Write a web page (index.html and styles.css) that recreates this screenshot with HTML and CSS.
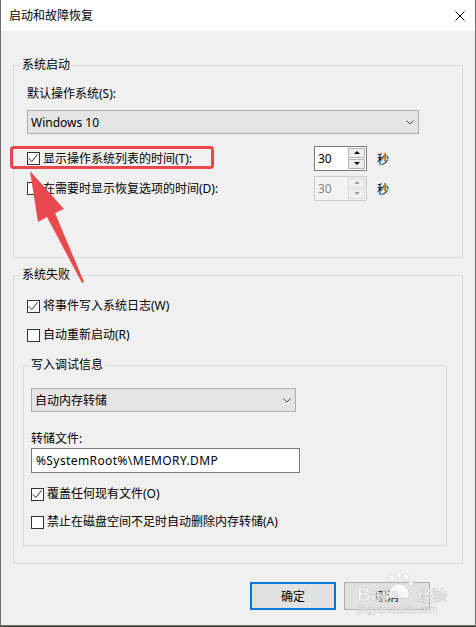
FILE: index.html
```html
<!DOCTYPE html>
<html lang="zh-CN">

<head>
    <meta charset="UTF-8">
    <meta name="viewport" content="width=device-width, initial-scale=1.0">
    <title>启动和故障恢复</title>
    <link rel="stylesheet" href="styles.css">
</head>

<body>
    <div class="dialog">
        <div class="titlebar">
            <span class="title">启动和故障恢复</span>
            <svg class="close" width="10" height="10" viewBox="0 0 10 10">
                <path d="M0.5 0.5 L9.5 9.5 M9.5 0.5 L0.5 9.5" stroke="#000" stroke-width="1" fill="none" />
            </svg>
        </div>

        <fieldset class="group group-startup">
            <legend>系统启动</legend>
            <div class="field-label">默认操作系统(S):</div>
            <div class="combo combo-os">
                <span>Windows 10</span>
                <svg class="chevron" width="8" height="5" viewBox="0 0 8 5">
                    <path d="M0.5 0.5 L4 4 L7.5 0.5" stroke="#444" fill="none" />
                </svg>
            </div>

            <div class="timer-row timer-first">
                <label class="check">
                    <span class="box checked">
                        <svg width="11" height="11" viewBox="0 0 11 11">
                            <path d="M0.8 5.3 L3.8 8.6 L9.6 1.2" stroke="#333" stroke-width="1" fill="none" />
                        </svg>
                    </span>
                    显示操作系统列表的时间(T):
                </label>
                <div class="spin">
                    <span class="spin-value">30</span>
                    <span class="spin-buttons">
                        <span class="spin-btn"><i class="tri-up"></i></span>
                        <span class="spin-btn"><i class="tri-down"></i></span>
                    </span>
                </div>
                <span class="unit">秒</span>
            </div>

            <div class="timer-row timer-second">
                <label class="check">
                    <span class="box"></span>
                    在需要时显示恢复选项的时间(D):
                </label>
                <div class="spin disabled">
                    <span class="spin-value">30</span>
                    <span class="spin-buttons">
                        <span class="spin-btn"><i class="tri-up"></i></span>
                        <span class="spin-btn"><i class="tri-down"></i></span>
                    </span>
                </div>
                <span class="unit">秒</span>
            </div>
        </fieldset>

        <fieldset class="group group-failure">
            <legend>系统失败</legend>
            <label class="check row-log">
                <span class="box checked">
                    <svg width="11" height="11" viewBox="0 0 11 11">
                        <path d="M0.8 5.3 L3.8 8.6 L9.6 1.2" stroke="#333" stroke-width="1" fill="none" />
                    </svg>
                </span>
                将事件写入系统日志(W)
            </label>
            <label class="check row-restart">
                <span class="box"></span>
                自动重新启动(R)
            </label>

            <fieldset class="group group-debug">
                <legend>写入调试信息</legend>
                <div class="combo combo-dump">
                    <span>自动内存转储</span>
                    <svg class="chevron" width="8" height="5" viewBox="0 0 8 5">
                        <path d="M0.5 0.5 L4 4 L7.5 0.5" stroke="#444" fill="none" />
                    </svg>
                </div>
                <div class="field-label dump-label">转储文件:</div>
                <div class="path-input">%SystemRoot%\MEMORY.DMP</div>
                <label class="check row-overwrite">
                    <span class="box checked">
                        <svg width="11" height="11" viewBox="0 0 11 11">
                            <path d="M0.8 5.3 L3.8 8.6 L9.6 1.2" stroke="#333" stroke-width="1" fill="none" />
                        </svg>
                    </span>
                    覆盖任何现有文件(O)
                </label>
                <label class="check row-lowdisk">
                    <span class="box"></span>
                    禁止在磁盘空间不足时自动删除内存转储(A)
                </label>
            </fieldset>
        </fieldset>

        <div class="buttons">
            <button class="btn btn-default">确定</button>
            <button class="btn">取消</button>
        </div>

        <!-- 标注：红框和箭头，以及水印 -->
        <svg class="annotation" width="476" height="627" viewBox="0 0 476 627">
            <rect x="11.5" y="147.5" width="201" height="20" rx="2" fill="none" stroke="#ea464c" stroke-width="3" />
            <polygon fill="#ea4a4e"
                points="30,171 64,209 55,213 84,282 82,283 47,217 38,222" />
            <g class="watermark">
                <text x="357" y="601" class="wm-big">Bai</text>
                <ellipse cx="392" cy="578" rx="2.6" ry="3.4" />
                <ellipse cx="399" cy="575" rx="2.6" ry="3.4" />
                <ellipse cx="406" cy="577" rx="2.6" ry="3.4" />
                <ellipse cx="411" cy="583" rx="2.2" ry="3" />
                <path d="M390 598 C386 592 393 584 399 584 C405 584 412 592 408 598 Z" />
                <text x="391" y="597" class="wm-du">du</text>
                <text x="417" y="601" class="wm-cn">经验</text>
                <text x="357" y="613" class="wm-url">jingyan.baidu.com</text>
            </g>
        </svg>
    </div>
</body>

</html>
```

FILE: styles.css
```css
body {
    margin: 0;
    background: #3d4a33;
    font-family: "Noto Sans", "Noto Sans CJK SC", sans-serif;
    font-size: 12px;
    color: #000;
}

.dialog {
    position: relative;
    width: 476px;
    height: 626px;
    box-sizing: border-box;
    background: #f0f0f0;
    border: 1px solid #6d6d6d;
    border-top: none;
}

.titlebar {
    height: 31px;
    background: #fff;
    display: flex;
    align-items: center;
    justify-content: space-between;
    padding: 0 10px 0 8px;
}

.title {
    line-height: 16px;
}

.group {
    margin: 0 0 0 12px;
    border: 1px solid #dcdcdc;
    box-sizing: border-box;
    min-width: 0;
}

.group legend {
    padding: 0 2px;
    line-height: 16px;
}

.group-startup {
    width: 450px;
    margin-top: 26px;
    padding: 13px 15px 56px 13px;
}

.group-startup legend {
    margin-left: -7px;
}

.group-failure {
    width: 450px;
    margin-top: 9px;
    padding: 15px 15px 17px 9px;
}

.group-failure legend {
    margin-left: -3px;
}

.group-debug {
    margin: 14px 0 0 0;
    padding: 15px 7px 15px 7px;
}

.group-debug legend {
    margin-left: -2px;
}

.field-label {
    line-height: 16px;
}

.combo {
    display: flex;
    align-items: center;
    justify-content: space-between;
    height: 24px;
    box-sizing: border-box;
    border: 1px solid #adadad;
    background: #e5e5e5;
    padding: 0 4px 0 3px;
}

.combo-os {
    width: 392px;
    margin-top: 8px;
}

.combo-dump {
    width: 265px;
}

.check {
    display: flex;
    align-items: center;
    gap: 3px;
    height: 16px;
    line-height: 16px;
    white-space: nowrap;
}

.box {
    flex: none;
    width: 13px;
    height: 13px;
    box-sizing: border-box;
    border: 1px solid #333;
    background: #fff;
}

.box svg {
    display: block;
}

.timer-row {
    display: grid;
    grid-template-columns: 287px 53px auto;
    align-items: center;
    height: 25px;
}

.timer-first {
    margin-top: 12px;
}

.timer-second {
    margin-top: 5px;
}

.spin {
    display: flex;
    width: 53px;
    height: 25px;
    box-sizing: border-box;
    border: 1px solid #7a7a7a;
    background: #fff;
}

.spin-value {
    flex: 1;
    padding-left: 3px;
    line-height: 23px;
}

.spin-buttons {
    display: flex;
    flex-direction: column;
    gap: 1px;
    padding: 1px 1px 1px 0;
}

.spin-btn {
    display: flex;
    align-items: center;
    justify-content: center;
    width: 15px;
    height: 10px;
    border: 1px solid #b4b4b4;
    background: #ececec;
    box-sizing: content-box;
}

.spin-btn:first-child {
    height: 9px;
}

.tri-up,
.tri-down {
    width: 0;
    height: 0;
    border-left: 3px solid transparent;
    border-right: 3px solid transparent;
}

.tri-up {
    border-bottom: 3px solid #000;
}

.tri-down {
    border-top: 3px solid #000;
}

.spin.disabled {
    border-color: #cccccc;
    background: #f3f3f3;
    color: #838383;
}

.spin.disabled .spin-btn {
    border-color: #dadada;
    background: #f0f0f0;
}

.spin.disabled .tri-up {
    border-bottom-color: #a3a3a3;
}

.spin.disabled .tri-down {
    border-top-color: #a3a3a3;
}

.unit {
    margin-left: 10px;
}

.row-log {
    margin-left: 4px;
}

.row-restart {
    margin: 13px 0 0 4px;
}

.dump-label {
    margin-top: 19px;
}

.path-input {
    width: 269px;
    height: 25px;
    box-sizing: border-box;
    margin-top: 1px;
    border: 1px solid #7a7a7a;
    background: #fff;
    padding-left: 4px;
    line-height: 23px;
    letter-spacing: 0.4px;
}

.row-overwrite {
    margin-top: 13px;
}

.row-lowdisk {
    margin-top: 12px;
}

.buttons {
    display: flex;
    justify-content: flex-end;
    gap: 8px;
    margin-top: 18px;
    padding-right: 45px;
}

.btn {
    width: 86px;
    height: 28px;
    box-sizing: border-box;
    border: 1px solid #adadad;
    background: #e1e1e1;
    font-family: inherit;
    font-size: 12px;
    color: #000;
    padding: 0;
}

.btn-default {
    border: 2px solid #0078d7;
}

.annotation {
    position: absolute;
    left: -1px;
    top: 0;
    pointer-events: none;
}

.watermark {
    fill: #fff;
    fill-opacity: 0.8;
    stroke: #c9c9c9;
    stroke-width: 0.6;
}

.wm-big {
    font-family: "Liberation Sans", sans-serif;
    font-size: 19px;
    font-weight: bold;
}

.wm-du {
    font-family: "Liberation Sans", sans-serif;
    font-size: 8px;
    font-weight: bold;
    fill: #e0e0e0;
    stroke: none;
}

.wm-cn {
    font-family: "Noto Sans CJK SC", sans-serif;
    font-size: 15px;
    font-weight: bold;
}

.wm-url {
    font-family: "Liberation Sans", sans-serif;
    font-size: 10px;
    stroke-width: 0.4;
}
```
